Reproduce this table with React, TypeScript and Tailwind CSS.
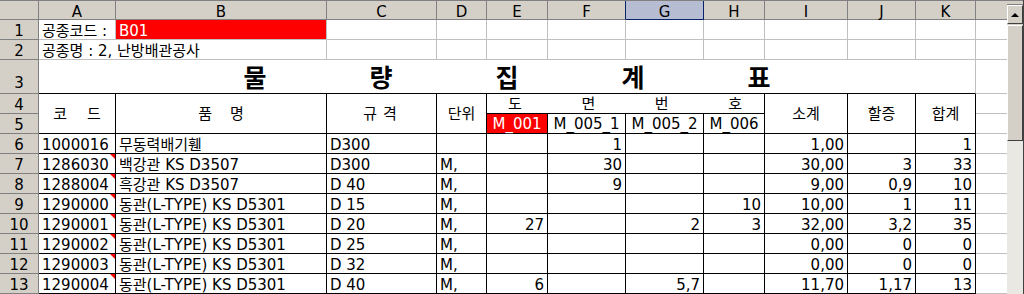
import React from 'react';

type Row = {
  n: number;
  a: string;
  b: string;
  c: string;
  d: string;
  e: string;
  f: string;
  g: string;
  h: string;
  i: string;
  j: string;
  k: string;
  note: boolean;
};

const data: Row[] = [
  { n: 6, a: '1000016', b: '무동력배기휀', c: 'D300', d: '', e: '', f: '1', g: '', h: '', i: '1,00', j: '', k: '1', note: false },
  { n: 7, a: '1286030', b: '백강관 KS D3507', c: 'D300', d: 'M,', e: '', f: '30', g: '', h: '', i: '30,00', j: '3', k: '33', note: true },
  { n: 8, a: '1288004', b: '흑강관 KS D3507', c: 'D 40', d: 'M,', e: '', f: '9', g: '', h: '', i: '9,00', j: '0,9', k: '10', note: true },
  { n: 9, a: '1290000', b: '동관(L-TYPE) KS D5301', c: 'D 15', d: 'M,', e: '', f: '', g: '', h: '10', i: '10,00', j: '1', k: '11', note: true },
  { n: 10, a: '1290001', b: '동관(L-TYPE) KS D5301', c: 'D 20', d: 'M,', e: '27', f: '', g: '2', h: '3', i: '32,00', j: '3,2', k: '35', note: true },
  { n: 11, a: '1290002', b: '동관(L-TYPE) KS D5301', c: 'D 25', d: 'M,', e: '', f: '', g: '', h: '', i: '0,00', j: '0', k: '0', note: true },
  { n: 12, a: '1290003', b: '동관(L-TYPE) KS D5301', c: 'D 32', d: 'M,', e: '', f: '', g: '', h: '', i: '0,00', j: '0', k: '0', note: true },
  { n: 13, a: '1290004', b: '동관(L-TYPE) KS D5301', c: 'D 40', d: 'M,', e: '6', f: '', g: '5,7', h: '', i: '11,70', j: '1,17', k: '13', note: true },
];

const gray = 'border-r border-b border-[#c0c0c0]';
const grayB = 'border-b border-[#c0c0c0]';
const blk = 'border-r border-b border-black';
const hdr = 'bg-[#d4d0c8] border-r border-b border-[#808080]';
const L = 'items-end justify-start pl-[3px]';
const R = 'items-end justify-end pr-[3px]';
const CT = 'items-center justify-center';

function Cell({ c = '', children }: { c?: string; children?: React.ReactNode }) {
  return <div className={`relative flex whitespace-nowrap ${c}`}>{children}</div>;
}

function RowHead({ n }: { n: number }) {
  return <Cell c={`${hdr} items-end justify-center`}>{n}</Cell>;
}

function Note() {
  return (
    <span className="absolute right-0 top-0 h-0 w-0 border-l-[5px] border-t-[5px] border-l-transparent border-t-[#ff0000]" />
  );
}

function ScrollBar() {
  return (
    <div className="flex h-[294px] w-[17px] shrink-0 flex-col bg-[#d4d0c8] border-r border-[#404040]">
      <div className="h-[5px] border-t border-b border-t-[#808080] border-b-[#808080]" />
      <div className="flex h-[19px] items-center justify-center border border-t-white border-l-white border-b-[#404040] border-r-[#404040]">
        <span className="h-0 w-0 border-x-[4px] border-b-[4px] border-x-transparent border-b-black" />
      </div>
      <div className="mt-[1px] h-[116px] border border-t-white border-l-white border-b-[#404040] border-r-[#404040]" />
      <div className="flex-1 bg-[#eae8e3]" />
    </div>
  );
}

const letters = ['A', 'B', 'C', 'D', 'E', 'F', 'G', 'H', 'I', 'J', 'K'];

export default function App() {
  return (
    <div className="flex h-[294px] w-[1024px] overflow-hidden bg-white font-['DejaVu_Sans','Noto_Sans_CJK_KR',sans-serif] text-[15px] leading-[16px] text-black">
      <div className="grid h-[294px] w-[1007px] shrink-0 grid-cols-[39px_77px_211px_110px_50px_61px_78px_78px_61px_83px_68px_60px_31px] grid-rows-[19px_20px_20px_34px_20px_20px_20px_20px_20px_20px_20px_20px_20px_20px] border-t border-[#808080]">
        {/* column headers */}
        <Cell c={hdr} />
        {letters.map((l) => {
          if (l === 'G')
            return (
              <Cell key={l} c="bg-[#b6bdd2] border-r border-b border-[#0a246a] items-end justify-center leading-[14px]">
                {l}
              </Cell>
            );
          if (l === 'F')
            return (
              <Cell key={l} c="bg-[#d4d0c8] border-r border-b border-[#808080] border-r-[#0a246a] items-end justify-center leading-[14px]">
                {l}
              </Cell>
            );
          return (
            <Cell key={l} c={`${hdr} items-end justify-center leading-[14px]`}>
              {l}
            </Cell>
          );
        })}
        <Cell c="bg-[#d4d0c8] border-b border-[#808080]" />

        {/* row 1 */}
        <RowHead n={1} />
        <Cell c={`${gray} ${L}`}>공종코드 :</Cell>
        <Cell c={`${gray} ${L} bg-[#ff0000] text-white`}>B01</Cell>
        {[0, 1, 2, 3, 4, 5, 6, 7, 8].map((i) => (
          <Cell key={i} c={gray} />
        ))}
        <Cell c={grayB} />

        {/* row 2 */}
        <RowHead n={2} />
        <Cell c={`${gray} ${L} col-span-2`}>공종명 : 2, 난방배관공사</Cell>
        {[0, 1, 2, 3, 4, 5, 6, 7, 8].map((i) => (
          <Cell key={i} c={gray} />
        ))}
        <Cell c={grayB} />

        {/* row 3 title */}
        <Cell c={`${hdr} items-end justify-center pb-[2px]`}>3</Cell>
        <Cell c="col-span-11 border-r border-b border-r-[#c0c0c0] border-b-black items-center justify-center pt-[4px] text-[25px] font-bold leading-[25px]">
          <div className="flex gap-[103px]">
            <span>물</span>
            <span>량</span>
            <span>집</span>
            <span>계</span>
            <span>표</span>
          </div>
        </Cell>
        <Cell c={grayB} />

        {/* rows 4-5 header */}
        <RowHead n={4} />
        <Cell c={`${blk} row-span-2 ${CT} gap-[20px]`}>
          <span>코</span>
          <span>드</span>
        </Cell>
        <Cell c={`${blk} row-span-2 ${CT} gap-[18px]`}>
          <span>품</span>
          <span>명</span>
        </Cell>
        <Cell c={`${blk} row-span-2 ${CT} gap-[6px] pr-[3px]`}>
          <span>규</span>
          <span>격</span>
        </Cell>
        <Cell c={`${blk} row-span-2 ${CT}`}>단위</Cell>
        <Cell c={`${blk} col-span-4 items-center justify-between pl-[21px] pr-[22px]`}>
          <span>도</span>
          <span>면</span>
          <span>번</span>
          <span>호</span>
        </Cell>
        <Cell c={`${blk} row-span-2 ${CT}`}>소계</Cell>
        <Cell c={`${blk} row-span-2 ${CT}`}>할증</Cell>
        <Cell c={`${blk} row-span-2 ${CT}`}>합계</Cell>
        <Cell c={grayB} />

        <RowHead n={5} />
        <Cell c={`${blk} items-end justify-center pb-[1px] bg-[#ff0000] text-white`}>M_001</Cell>
        <Cell c={`${blk} items-end justify-center pb-[1px]`}>M_005_1</Cell>
        <Cell c={`${blk} items-end justify-center pb-[1px]`}>M_005_2</Cell>
        <Cell c={`${blk} items-end justify-center pb-[1px]`}>M_006</Cell>
        <Cell c={grayB} />

        {/* data rows */}
        {data.map((r) => (
          <React.Fragment key={r.n}>
            <RowHead n={r.n} />
            <Cell c={`${blk} ${L}`}>
              {r.a}
              {r.note && <Note />}
            </Cell>
            <Cell c={`${blk} ${L}`}>{r.b}</Cell>
            <Cell c={`${blk} ${L}`}>{r.c}</Cell>
            <Cell c={`${blk} ${L}`}>{r.d}</Cell>
            <Cell c={`${blk} ${R}`}>{r.e}</Cell>
            <Cell c={`${blk} ${R}`}>{r.f}</Cell>
            <Cell c={`${blk} ${R}`}>{r.g}</Cell>
            <Cell c={`${blk} ${R}`}>{r.h}</Cell>
            <Cell c={`${blk} ${R}`}>{r.i}</Cell>
            <Cell c={`${blk} ${R}`}>{r.j}</Cell>
            <Cell c={`${blk} ${R}`}>{r.k}</Cell>
            <Cell c={grayB} />
          </React.Fragment>
        ))}
      </div>
      <ScrollBar />
    </div>
  );
}
